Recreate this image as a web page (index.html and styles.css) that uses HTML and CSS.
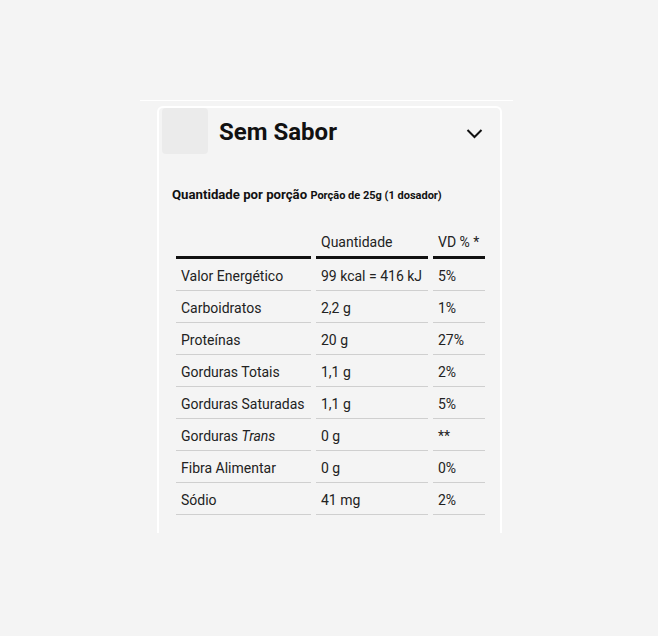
FILE: index.html
```html
<!DOCTYPE html>
<html lang="pt-BR">
<head>
<meta charset="utf-8">
<title>Sem Sabor</title>
<link rel="stylesheet" href="styles.css">
</head>
<body>
<div class="wrap">
  <div class="card">
    <div class="head">
      <div class="thumb"></div>
      <h2 class="title">Sem Sabor</h2>
      <svg class="chev" width="17" height="11" viewBox="0 0 17 11"><polyline points="1.5,2 8.5,9 15.5,2" fill="none" stroke="#111" stroke-width="2"/></svg>
    </div>
    <p class="portion"><b>Quantidade por porção</b> <span class="small">Porção de 25g (1 dosador)</span></p>
    <table class="nut">
      <colgroup><col class="c1"><col class="c2"><col class="c3"></colgroup>
      <thead>
        <tr><th></th><th>Quantidade</th><th>VD % *</th></tr>
      </thead>
      <tbody>
        <tr><td>Valor Energético</td><td>99 kcal = 416 kJ</td><td>5%</td></tr>
        <tr><td>Carboidratos</td><td>2,2 g</td><td>1%</td></tr>
        <tr><td>Proteínas</td><td>20 g</td><td>27%</td></tr>
        <tr><td>Gorduras Totais</td><td>1,1 g</td><td>2%</td></tr>
        <tr><td>Gorduras Saturadas</td><td>1,1 g</td><td>5%</td></tr>
        <tr><td>Gorduras <i>Trans</i></td><td>0 g</td><td>**</td></tr>
        <tr><td>Fibra Alimentar</td><td>0 g</td><td>0%</td></tr>
        <tr><td>Sódio</td><td>41 mg</td><td>2%</td></tr>
      </tbody>
    </table>
  </div>
</div>
</body>
</html>
```
FILE: styles.css
```css
html, body {
  margin: 0;
  padding: 0;
  background: #f4f4f4;
  font-family: Roboto, "Liberation Sans", sans-serif;
  color: #1f1f1f;
}
.wrap {
  margin: 100px 0 0 140px;
  width: 373px;
  border-top: 1px solid #ffffff;
}
.card {
  margin: 5px 0 0 17px;
  width: 341px;
  height: 425px;
  border: 2px solid #ffffff;
  border-bottom: none;
  border-radius: 6px 6px 0 0;
  overflow: hidden;
  background: #f4f4f4;
}
.head {
  display: flex;
  align-items: center;
  height: 46px;
  padding: 0 17px 0 3px;
}
.thumb {
  width: 46px;
  height: 46px;
  border-radius: 4px;
  background: #ebebeb;
  flex: none;
}
.title {
  margin: 2px 0 0 11px;
  font-size: 24px;
  font-weight: 700;
  color: #111;
  flex: 1;
  line-height: 28px;
}
.chev {
  display: block;
  margin-top: 4px;
}
.portion {
  margin: 33px 0 0 13px;
  font-size: 13.2px;
  line-height: 16px;
  color: #111;
}
.portion b { font-weight: 700; }
.small {
  font-size: 11px;
  font-weight: 700;
}
.nut {
  margin: 22px 0 0 12px;
  border-collapse: separate;
  border-spacing: 5px 0;
  table-layout: fixed;
  width: 319px;
  font-size: 14px;
  color: #222;
}
.c1 { width: 135px; }
.c2 { width: 112px; }
.c3 { width: 52px; }
.nut th {
  text-align: left;
  font-weight: 400;
  padding: 8px 5px 6px;
  line-height: 16px;
  border-bottom: 3px solid #111;
}
.nut td {
  height: 32px;
  padding: 2px 5px 0;
  line-height: 16px;
  border-bottom: 1px solid #cfcfcf;
  white-space: nowrap;
  box-sizing: border-box;
}
.nut td i { font-style: italic; }
```
